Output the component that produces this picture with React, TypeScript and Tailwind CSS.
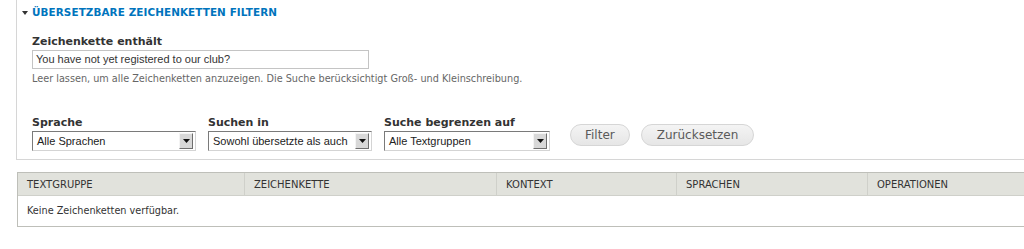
import React from "react";

function Select({ label, value, width }: { label: string; value: string; width: string }) {
  return (
    <div className="flex flex-col">
      <div className="text-[11px] font-bold text-[#333] leading-[15px] mb-[1px]" style={{ fontFamily: '"DejaVu Sans", Verdana, sans-serif' }}>
        {label}
      </div>
      <div className={`flex items-center h-[20px] border border-[#7a7a7a] border-r-[#d4d4d4] border-b-[#d4d4d4] bg-white ${width}`}>
        <div className="flex-1 overflow-hidden whitespace-nowrap pl-[4px] text-[11px] text-[#222] leading-[18px]" style={{ fontFamily: '"Liberation Sans", Arial, sans-serif' }}>
          {value}
        </div>
        <div className="w-[14px] h-[16px] mr-[2px] flex items-center justify-center bg-[#d8d8d8] border border-t-[#f4f4f4] border-l-[#f4f4f4] border-r-[#6e6e6e] border-b-[#6e6e6e]">
          <svg width="7" height="4" viewBox="0 0 7 4"><path d="M0 0h7L3.5 4z" fill="#111" /></svg>
        </div>
      </div>
    </div>
  );
}

export default function App() {
  const sans = { fontFamily: '"DejaVu Sans", Verdana, sans-serif' };
  return (
    <div className="w-[1024px] h-[249px] bg-white overflow-hidden" style={sans}>
      <div className="ml-[16px] border-l border-b border-[#d6d6d6] pb-[8px]">
        <div className="flex items-center pt-[6px] pl-[5px] h-[19px]">
          <svg width="6" height="4" viewBox="0 0 6 4" className="mr-[4px]"><path d="M0 0h6L3 4z" fill="#333" /></svg>
          <span className="text-[10.4px] font-bold text-[#0074bd] uppercase tracking-[0.1px]">Übersetzbare Zeichenketten filtern</span>
        </div>
        <div className="pl-[15px] pt-[15px]">
          <div className="text-[11px] font-bold text-[#333] leading-[15px]">Zeichenkette enthält</div>
          <div className="w-[337px] h-[19px] border border-[#c4c4c4] bg-white mt-[1px] pl-[3px] text-[11px] leading-[17px] text-[#333]" style={{ fontFamily: '"Liberation Sans", Arial, sans-serif' }}>
            You have not yet registered to our club?
          </div>
          <div className="text-[9.7px] text-[#666] mt-[4px] leading-[12px]">
            Leer lassen, um alle Zeichenketten anzuzeigen. Die Suche berücksichtigt Groß- und Kleinschreibung.
          </div>
          <div className="flex items-end mt-[30px] gap-[12px]">
            <Select label="Sprache" value="Alle Sprachen" width="w-[164px]" />
            <Select label="Suchen in" value="Sowohl übersetzte als auch" width="w-[164px]" />
            <Select label="Suche begrenzen auf" value="Alle Textgruppen" width="w-[166px]" />
            <div className="flex gap-[11px] ml-[8px] mb-[5px]">
              <div className="h-[22px] px-[14px] rounded-full border border-[#d6d6d6] bg-[linear-gradient(#f4f4f4,#e6e6e6)] text-[12px] text-[#5a5a5a] leading-[20px]">Filter</div>
              <div className="h-[22px] px-[15px] rounded-full border border-[#d6d6d6] bg-[linear-gradient(#f4f4f4,#e6e6e6)] text-[12px] text-[#5a5a5a] leading-[20px]">Zurücksetzen</div>
            </div>
          </div>
        </div>
      </div>
      <div className="ml-[17px] mt-[12px] border border-[#bebfb9] border-r-0">
        <div className="flex h-[23px] bg-[#e1e2dc] border-b border-[#cfd0ca] text-[10px] text-[#333] uppercase items-center">
          <div className="w-[227px] pl-[9px] border-r border-[#cfd0ca] h-full flex items-center">Textgruppe</div>
          <div className="w-[252px] pl-[9px] border-r border-[#cfd0ca] h-full flex items-center">Zeichenkette</div>
          <div className="w-[180px] pl-[9px] border-r border-[#cfd0ca] h-full flex items-center">Kontext</div>
          <div className="w-[191px] pl-[9px] border-r border-[#cfd0ca] h-full flex items-center">Sprachen</div>
          <div className="flex-1 pl-[9px] h-full flex items-center">Operationen</div>
        </div>
        <div className="h-[30px] flex items-center pl-[9px] text-[9.7px] text-[#333]">Keine Zeichenketten verfügbar.</div>
      </div>
    </div>
  );
}
